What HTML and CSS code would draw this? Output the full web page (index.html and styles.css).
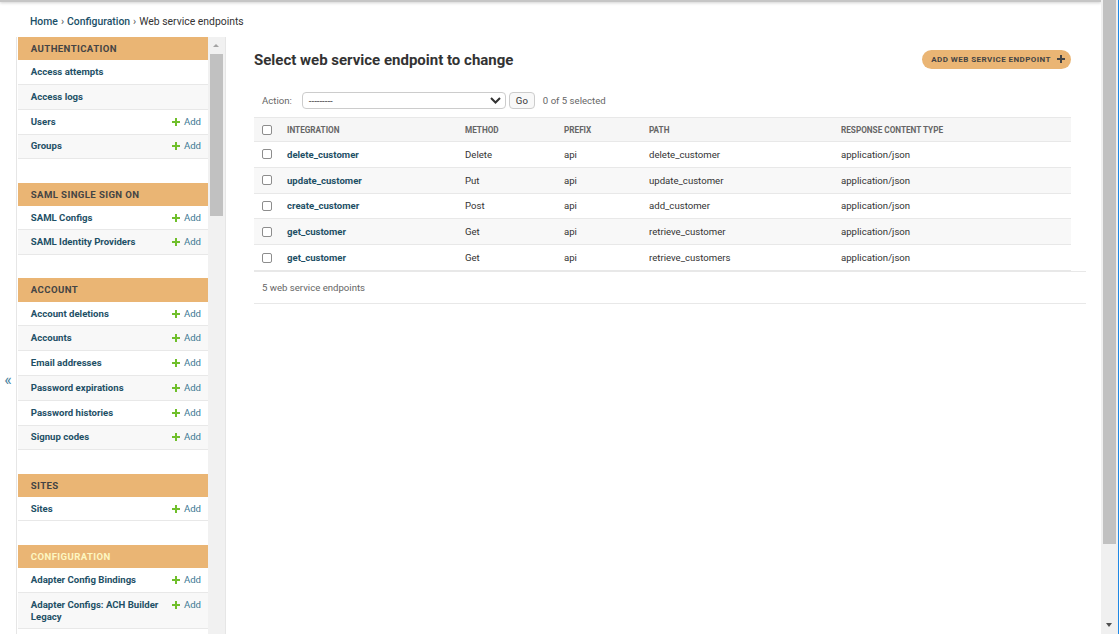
FILE: index.html
```html
<!DOCTYPE html>
<html lang="en">
<head>
<meta charset="utf-8">
<title>Select web service endpoint to change</title>
<link rel="stylesheet" href="styles.css">
</head>
<body>
<div class="window">
  <div class="page">
    <div class="topshadow"></div>
    <div class="breadcrumbs"><a href="#">Home</a><span class="sep">›</span><a href="#">Configuration</a><span class="sep">›</span><span>Web service endpoints</span></div>
    <div class="main">
      <div class="toggle">«</div>
      <div class="sidebar">
        <nav class="nav">
          <div class="module">
            <div class="caption">Authentication</div>
            <div class="row"><a class="model" href="#">Access attempts</a></div>
            <div class="row"><a class="model" href="#">Access logs</a></div>
            <div class="row"><a class="model" href="#">Users</a><a class="add" href="#"><svg class="plus" viewBox="0 0 8 8" width="8" height="8"><path d="M3 0h2v3h3v2H5v3H3V5H0V3h3z"/></svg>Add</a></div>
            <div class="row"><a class="model" href="#">Groups</a><a class="add" href="#"><svg class="plus" viewBox="0 0 8 8" width="8" height="8"><path d="M3 0h2v3h3v2H5v3H3V5H0V3h3z"/></svg>Add</a></div>
          </div>
          <div class="module">
            <div class="caption">SAML Single Sign On</div>
            <div class="row"><a class="model" href="#">SAML Configs</a><a class="add" href="#"><svg class="plus" viewBox="0 0 8 8" width="8" height="8"><path d="M3 0h2v3h3v2H5v3H3V5H0V3h3z"/></svg>Add</a></div>
            <div class="row"><a class="model" href="#">SAML Identity Providers</a><a class="add" href="#"><svg class="plus" viewBox="0 0 8 8" width="8" height="8"><path d="M3 0h2v3h3v2H5v3H3V5H0V3h3z"/></svg>Add</a></div>
          </div>
          <div class="module">
            <div class="caption">Account</div>
            <div class="row"><a class="model" href="#">Account deletions</a><a class="add" href="#"><svg class="plus" viewBox="0 0 8 8" width="8" height="8"><path d="M3 0h2v3h3v2H5v3H3V5H0V3h3z"/></svg>Add</a></div>
            <div class="row"><a class="model" href="#">Accounts</a><a class="add" href="#"><svg class="plus" viewBox="0 0 8 8" width="8" height="8"><path d="M3 0h2v3h3v2H5v3H3V5H0V3h3z"/></svg>Add</a></div>
            <div class="row"><a class="model" href="#">Email addresses</a><a class="add" href="#"><svg class="plus" viewBox="0 0 8 8" width="8" height="8"><path d="M3 0h2v3h3v2H5v3H3V5H0V3h3z"/></svg>Add</a></div>
            <div class="row"><a class="model" href="#">Password expirations</a><a class="add" href="#"><svg class="plus" viewBox="0 0 8 8" width="8" height="8"><path d="M3 0h2v3h3v2H5v3H3V5H0V3h3z"/></svg>Add</a></div>
            <div class="row"><a class="model" href="#">Password histories</a><a class="add" href="#"><svg class="plus" viewBox="0 0 8 8" width="8" height="8"><path d="M3 0h2v3h3v2H5v3H3V5H0V3h3z"/></svg>Add</a></div>
            <div class="row"><a class="model" href="#">Signup codes</a><a class="add" href="#"><svg class="plus" viewBox="0 0 8 8" width="8" height="8"><path d="M3 0h2v3h3v2H5v3H3V5H0V3h3z"/></svg>Add</a></div>
          </div>
          <div class="module">
            <div class="caption">Sites</div>
            <div class="row"><a class="model" href="#">Sites</a><a class="add" href="#"><svg class="plus" viewBox="0 0 8 8" width="8" height="8"><path d="M3 0h2v3h3v2H5v3H3V5H0V3h3z"/></svg>Add</a></div>
          </div>
          <div class="module">
            <div class="caption current">Configuration</div>
            <div class="row"><a class="model" href="#">Adapter Config Bindings</a><a class="add" href="#"><svg class="plus" viewBox="0 0 8 8" width="8" height="8"><path d="M3 0h2v3h3v2H5v3H3V5H0V3h3z"/></svg>Add</a></div>
            <div class="row"><a class="model" href="#">Adapter Configs: ACH Builder Legacy</a><a class="add" href="#"><svg class="plus" viewBox="0 0 8 8" width="8" height="8"><path d="M3 0h2v3h3v2H5v3H3V5H0V3h3z"/></svg>Add</a></div>
          </div>
        </nav>
        <div class="sb-track"><span class="sb-up"></span><span class="sb-thumb"></span></div>
      </div>
      <div class="content">
        <div class="title-row">
          <h1>Select web service endpoint to change</h1>
          <a class="add-btn" href="#"><span>Add web service endpoint</span><svg viewBox="0 0 8 8" width="8" height="8"><path d="M3 0h2v3h3v2H5v3H3V5H0V3h3z"/></svg></a>
        </div>
        <div class="actions">
          <span class="label">Action:</span>
          <div class="select"><span>---------</span><svg viewBox="0 0 11 7" width="11" height="7"><polyline points="1,1 5.5,5.5 10,1"/></svg></div>
          <div class="go">Go</div>
          <span class="counter">0 of 5 selected</span>
        </div>
        <div class="results">
          <div class="thead grid">
            <div class="cell"><span class="cb"></span></div>
            <div class="cell">Integration</div>
            <div class="cell">Method</div>
            <div class="cell">Prefix</div>
            <div class="cell">Path</div>
            <div class="cell">Response content type</div>
          </div>
          <div class="tr grid">
            <div class="cell"><span class="cb"></span></div>
            <div class="cell"><a href="#">delete_customer</a></div>
            <div class="cell">Delete</div>
            <div class="cell">api</div>
            <div class="cell">delete_customer</div>
            <div class="cell">application/json</div>
          </div>
          <div class="tr grid">
            <div class="cell"><span class="cb"></span></div>
            <div class="cell"><a href="#">update_customer</a></div>
            <div class="cell">Put</div>
            <div class="cell">api</div>
            <div class="cell">update_customer</div>
            <div class="cell">application/json</div>
          </div>
          <div class="tr grid">
            <div class="cell"><span class="cb"></span></div>
            <div class="cell"><a href="#">create_customer</a></div>
            <div class="cell">Post</div>
            <div class="cell">api</div>
            <div class="cell">add_customer</div>
            <div class="cell">application/json</div>
          </div>
          <div class="tr grid">
            <div class="cell"><span class="cb"></span></div>
            <div class="cell"><a href="#">get_customer</a></div>
            <div class="cell">Get</div>
            <div class="cell">api</div>
            <div class="cell">retrieve_customer</div>
            <div class="cell">application/json</div>
          </div>
          <div class="tr grid">
            <div class="cell"><span class="cb"></span></div>
            <div class="cell"><a href="#">get_customer</a></div>
            <div class="cell">Get</div>
            <div class="cell">api</div>
            <div class="cell">retrieve_customers</div>
            <div class="cell">application/json</div>
          </div>
        </div>
        <p class="paginator">5 web service endpoints</p>
      </div>
    </div>
  </div>
  <div class="vscroll"><span class="vthumb"></span><span class="vdown"></span></div>
  <div class="edge"></div>
</div>
</body>
</html>
```

FILE: styles.css
```css
* { box-sizing: border-box; }
html, body { margin: 0; padding: 0; height: 100%; }
body {
  font-family: Roboto, "Liberation Sans", sans-serif;
  color: #333;
  background: #fff;
  overflow: hidden;
}
a { text-decoration: none; }

.window { display: flex; width: 1119px; height: 634px; }
.page { flex: 1; min-width: 0; display: flex; flex-direction: column; }

.topshadow {
  height: 2px;
  flex: none;
  background: #c6c6c6;
  box-shadow: 0 1px 3px rgba(0, 0, 0, 0.22);
}

.breadcrumbs {
  height: 35px;
  flex: none;
  display: flex;
  align-items: center;
  padding: 4px 0 0 30px;
  font-size: 10.4px;
  color: #333;
}
.breadcrumbs a { color: #1b5068; font-weight: 500; }
.breadcrumbs .sep { margin: 0 3px; color: #555; }

.main { flex: 1; min-height: 0; display: flex; overflow: hidden; }

.toggle {
  width: 17px;
  flex: none;
  border-right: 1px solid #e6e6e6;
  color: #447e9b;
  font-size: 16px;
  line-height: 16px;
  text-align: center;
  padding-top: 335px;
}

.sidebar {
  flex: none;
  display: flex;
  padding-left: 1px;
  border-right: 1px solid #e6e6e6;
}
.nav { width: 190px; overflow: hidden; }

.module { margin-bottom: 23.2px; }
.caption {
  height: 23.2px;
  line-height: 23.2px;
  padding-left: 12.8px;
  background: #eab574;
  color: #444;
  font-size: 9.6px;
  font-weight: 700;
  letter-spacing: 0.4px;
  text-transform: uppercase;
}
.caption.current { color: #fdf7c2; }

.row {
  display: flex;
  align-items: flex-start;
  padding: 5.9px 7px 5.9px 12.8px;
  border-bottom: 1px solid #e8e8e8;
  font-size: 9.6px;
  line-height: 12px;
  background: #fff;
}
.row:nth-child(odd) { background: #f8f8f8; }
.model { flex: 1; min-width: 0; font-weight: 700; color: #1e5066; }
.add {
  margin-left: 8px;
  display: flex;
  align-items: center;
  gap: 4px;
  height: 12px;
  color: #3d7893;
  white-space: nowrap;
}
.plus { fill: #70bf2b; display: block; }

.sb-track {
  width: 17px;
  flex: none;
  background: #f1f1f1;
  display: flex;
  flex-direction: column;
  align-items: flex-start;
}
.sb-up {
  width: 0;
  height: 0;
  margin: 7px 0 0 5px;
  border-left: 3.5px solid transparent;
  border-right: 3.5px solid transparent;
  border-bottom: 3px solid #a3a3a3;
}
.sb-thumb {
  width: 13px;
  height: 162px;
  margin: 7px 0 0 2px;
  background: #c1c1c1;
}

.content { flex: 1; min-width: 0; padding: 12.5px 15px 0 28px; }

.title-row {
  display: flex;
  justify-content: space-between;
  align-items: center;
  margin-right: 15px;
}
h1 {
  margin: 0;
  font-size: 15px;
  line-height: 20px;
  font-weight: 700;
  color: #333;
}
.add-btn {
  height: 19px;
  margin-top: -1px;
  display: flex;
  align-items: center;
  gap: 6px;
  padding: 0 6px 0 9.6px;
  border-radius: 10px;
  background: #eab574;
  color: #444;
  font-size: 8px;
  font-weight: 700;
  letter-spacing: 0.45px;
  text-transform: uppercase;
}
.add-btn svg { fill: #444; display: block; }

.actions {
  display: flex;
  align-items: center;
  height: 17px;
  margin-top: 22.5px;
  padding-left: 8px;
  font-size: 9.6px;
  color: #666;
}
.select {
  width: 204px;
  height: 17px;
  margin-left: 10px;
  display: flex;
  align-items: center;
  justify-content: space-between;
  padding: 0 4px 0 6px;
  border: 1px solid #ccc;
  border-radius: 4px;
  color: #333;
  background: #fff;
}
.select svg { display: block; fill: none; stroke: #333; stroke-width: 2; }
.go {
  width: 26px;
  height: 17px;
  margin-left: 3px;
  display: flex;
  align-items: center;
  justify-content: center;
  border: 1px solid #ccc;
  border-radius: 4px;
  background: #f8f8f8;
  color: #333;
}
.counter { margin-left: 8px; color: #666; }

.results { width: 817px; margin-top: 8px; font-size: 9.6px; }
.grid {
  display: grid;
  grid-template-columns: 25px 178px 99px 85px 192px 238px;
  align-items: center;
}
.cell { padding-left: 8px; white-space: nowrap; overflow: hidden; }
.cell a { color: #1e5066; font-weight: 700; }
.thead {
  height: 25px;
  background: #f6f6f6;
  border-top: 1px solid #e8e8e8;
  border-bottom: 1px solid #e8e8e8;
  font-size: 8.2px;
  font-weight: 700;
  color: #666;
  text-transform: uppercase;
}
.tr {
  height: 25.8px;
  border-bottom: 1px solid #e8e8e8;
  background: #fff;
  color: #333;
}
.tr:nth-child(odd) { background: #f8f8f8; }
.cb {
  display: block;
  width: 10px;
  height: 10px;
  border: 1px solid #8d8d8d;
  border-radius: 2px;
  background: #fff;
}

.paginator {
  margin: 0;
  height: 33px;
  display: flex;
  align-items: center;
  padding-left: 8px;
  border-top: 1px solid #e8e8e8;
  border-bottom: 1px solid #e8e8e8;
  font-size: 9.6px;
  color: #666;
}

.vscroll {
  width: 17px;
  flex: none;
  background: #f0f0f0;
  display: flex;
  flex-direction: column;
  align-items: flex-start;
}
.vthumb {
  display: block;
  width: 13px;
  height: 544px;
  margin-left: 2px;
  background: #c1c1c1;
}
.vdown {
  width: 0;
  height: 0;
  margin: auto 0 7px 5px;
  border-left: 3.5px solid transparent;
  border-right: 3.5px solid transparent;
  border-top: 4px solid #505050;
}
.edge { width: 1px; flex: none; background: #1e88e5; }
```
